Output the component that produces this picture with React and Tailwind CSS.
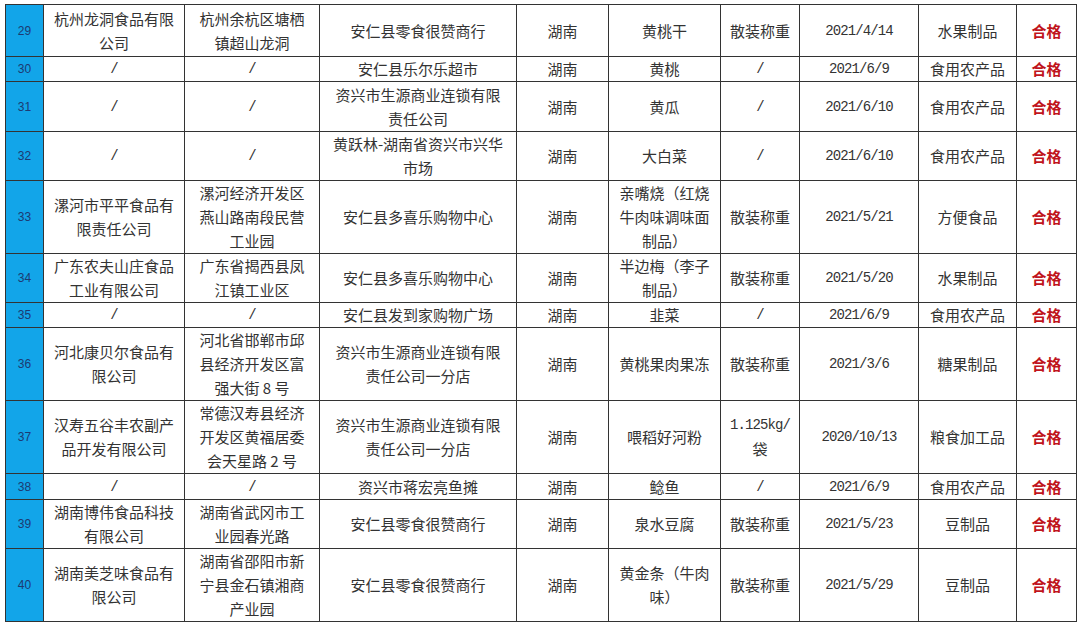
const rows = [
    ['29', ['杭州龙洞食品有限', '公司'], ['杭州余杭区塘栖', '镇超山龙洞'], ['安仁县零食很赞商行'], '湖南', ['黄桃干'], ['散装称重'], '2021/4/14', '水果制品', 'h-[52px]'],
    ['30', ['/'], ['/'], ['安仁县乐尔乐超市'], '湖南', ['黄桃'], ['/'], '2021/6/9', '食用农产品', 'h-[25px]'],
    ['31', ['/'], ['/'], ['资兴市生源商业连锁有限', '责任公司'], '湖南', ['黄瓜'], ['/'], '2021/6/10', '食用农产品', 'h-[50px]'],
    ['32', ['/'], ['/'], ['黄跃林-湖南省资兴市兴华', '市场'], '湖南', ['大白菜'], ['/'], '2021/6/10', '食用农产品', 'h-[48px]'],
    ['33', ['漯河市平平食品有', '限责任公司'], ['漯河经济开发区', '燕山路南段民营', '工业园'], ['安仁县多喜乐购物中心'], '湖南', ['亲嘴烧（红烧', '牛肉味调味面', '制品）'], ['散装称重'], '2021/5/21', '方便食品', 'h-[73px]'],
    ['34', ['广东农夫山庄食品', '工业有限公司'], ['广东省揭西县凤', '江镇工业区'], ['安仁县多喜乐购物中心'], '湖南', ['半边梅（李子', '制品）'], ['散装称重'], '2021/5/20', '水果制品', 'h-[48px]'],
    ['35', ['/'], ['/'], ['安仁县发到家购物广场'], '湖南', ['韭菜'], ['/'], '2021/6/9', '食用农产品', 'h-[25px]'],
    ['36', ['河北康贝尔食品有', '限公司'], ['河北省邯郸市邱', '县经济开发区富', '强大街 8 号'], ['资兴市生源商业连锁有限', '责任公司一分店'], '湖南', ['黄桃果肉果冻'], ['散装称重'], '2021/3/6', '糖果制品', 'h-[72px]'],
    ['37', ['汉寿五谷丰农副产', '品开发有限公司'], ['常德汉寿县经济', '开发区黄福居委', '会天星路 2 号'], ['资兴市生源商业连锁有限', '责任公司一分店'], '湖南', ['喂稻好河粉'], ['1.125kg/', '袋'], '2020/10/13', '粮食加工品', 'h-[73px]'],
    ['38', ['/'], ['/'], ['资兴市蒋宏亮鱼摊'], '湖南', ['鲶鱼'], ['/'], '2021/6/9', '食用农产品', 'h-[26px]'],
    ['39', ['湖南博伟食品科技', '有限公司'], ['湖南省武冈市工', '业园春光路'], ['安仁县零食很赞商行'], '湖南', ['泉水豆腐'], ['散装称重'], '2021/5/23', '豆制品', 'h-[49px]'],
    ['40', ['湖南美芝味食品有', '限公司'], ['湖南省邵阳市新', '宁县金石镇湘商', '产业园'], ['安仁县零食很赞商行'], '湖南', ['黄金条（牛肉', '味）'], ['散装称重'], '2021/5/29', '豆制品', 'h-[72px]'],
]

// latin-only lines are set in a narrow mono, like the SimSun half-width glyphs
function Line({ text }) {
    const latin = /^[\x00-\x7f]+$/.test(text)
    return latin
        ? <div className="font-['Liberation_Mono',monospace] text-[14px] tracking-[-0.9px]">{text}</div>
        : <div>{text}</div>
}

function Cell({ lines }) {
    return (
        <td className="border border-[#333] text-center align-middle p-0">
            {lines.map((l, i) => <Line key={i} text={l} />)}
        </td>
    )
}

export default function App() {
    return (
        <div className="bg-white w-[1080px] h-[623px] pt-[4px] pl-[5px] font-['Noto_Sans_CJK_SC',sans-serif] text-[15px] leading-[24px] text-[#333]">
            <table className="table-fixed border-collapse w-[1071px]">
                <colgroup>
                    <col className="w-[38px]" />
                    <col className="w-[141px]" />
                    <col className="w-[135px]" />
                    <col className="w-[197px]" />
                    <col className="w-[92px]" />
                    <col className="w-[112px]" />
                    <col className="w-[79px]" />
                    <col className="w-[119px]" />
                    <col className="w-[98px]" />
                    <col className="w-[60px]" />
                </colgroup>
                <tbody>
                    {rows.map((r) => (
                        <tr key={r[0]} className={r[9]}>
                            <td className="border border-[#333] bg-[#12a5e9] text-center align-middle p-0 font-['Liberation_Sans',sans-serif] text-[12px] text-[#1d3a72]">
                                {r[0]}
                            </td>
                            <Cell lines={r[1]} />
                            <Cell lines={r[2]} />
                            <Cell lines={r[3]} />
                            <Cell lines={[r[4]]} />
                            <Cell lines={r[5]} />
                            <Cell lines={r[6]} />
                            <Cell lines={[r[7]]} />
                            <Cell lines={[r[8]]} />
                            <td className="border border-[#333] text-center align-middle p-0 font-bold text-[#c0141c]">
                                合格
                            </td>
                        </tr>
                    ))}
                </tbody>
            </table>
        </div>
    )
}
